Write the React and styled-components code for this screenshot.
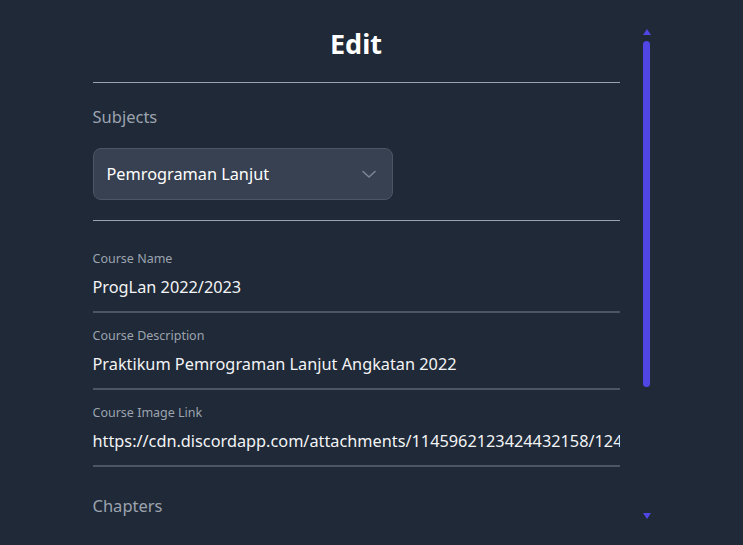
import React from "react";
import styled, { createGlobalStyle } from "styled-components";

//Global page styles
const GlobalStyle = createGlobalStyle`
  html, body {
    margin: 0;
    padding: 0;
    background-color: #1f2937;
    height: 545px;
    overflow: hidden;
  }
  * {
    box-sizing: border-box;
  }
`;

const Page = styled.div`
  display: flex;
  justify-content: center;
  padding-top: 24px;
  font-family: "Segoe UI", "Noto Sans", "Open Sans", sans-serif;
`;

const Panel = styled.div`
  display: flex;
  gap: 23px;
  width: 558px;
`;

const Content = styled.div`
  width: 527px;
  display: flex;
  flex-direction: column;
`;

const Title = styled.h1`
  margin: 0;
  font-size: 27px;
  line-height: 40px;
  font-weight: 700;
  color: #ffffff;
  text-align: center;
`;

const Divider = styled.hr`
  margin: ${({ top }) => top}px 0 0 0;
  border: none;
  border-top: 1px solid #9ca3af;
  width: 100%;
`;

const SectionLabel = styled.div`
  margin-top: ${({ top }) => top}px;
  font-size: 16.5px;
  line-height: 24px;
  color: #9ca3af;
`;

const Select = styled.div`
  margin-top: 19px;
  width: 300px;
  height: 52px;
  display: flex;
  align-items: center;
  justify-content: space-between;
  padding: 0 15px 0 13px;
  background-color: #374151;
  border: 1px solid #4b5563;
  border-radius: 8px;
  color: #ffffff;
  font-size: 16.3px;
`;

const Field = styled.div`
  margin-top: ${({ top }) => top}px;
  display: flex;
  flex-direction: column;
  gap: 8px;
`;

const FieldLabel = styled.label`
  font-size: 12.5px;
  line-height: 16px;
  color: #9ca3af;
`;

const FieldInput = styled.input`
  width: 100%;
  background: transparent;
  border: none;
  border-bottom: 2px solid #4b5563;
  outline: none;
  padding: 0 0 12px 0;
  font-family: inherit;
  font-size: 16.3px;
  line-height: 24px;
  color: #f3f4f6;
`;

const ScrollTrack = styled.div`
  width: 8px;
  height: 490px;
  margin-top: 5px;
  display: flex;
  flex-direction: column;
  align-items: center;
`;

const Arrow = styled.div`
  width: 0;
  height: 0;
  border-left: 4px solid transparent;
  border-right: 4px solid transparent;
  ${({ down }) =>
    down
      ? "border-top: 6px solid #4f46e5;"
      : "border-bottom: 6px solid #4f46e5;"}
`;

const Thumb = styled.div`
  margin-top: 6px;
  width: 7px;
  height: 346px;
  border-radius: 4px;
  background-color: #4f46e5;
`;

const Spacer = styled.div`
  flex: 1;
`;

const Chevron = () => (
  <svg width="16" height="10" viewBox="0 0 16 10" fill="none" stroke="#7d8594" strokeWidth="1.6" strokeLinecap="round" strokeLinejoin="round">
    <path d="M2 2.5l6 5.5 6-5.5" />
  </svg>
);

const fields = [
  { label: "Course Name", value: "ProgLan 2022/2023", top: 30 },
  { label: "Course Description", value: "Praktikum Pemrograman Lanjut Angkatan 2022", top: 15 },
  {
    label: "Course Image Link",
    value: "https://cdn.discordapp.com/attachments/1145962123424432158/1245678901234567890/proglan.png",
    top: 15,
  },
];

const App = () => {
  return (
    <Page>
      <GlobalStyle />
      <Panel>
        <Content>
          <Title>Edit</Title>
          <Divider top={18} />
          <SectionLabel top={22}>Subjects</SectionLabel>
          <Select>
            <span>Pemrograman Lanjut</span>
            <Chevron />
          </Select>
          <Divider top={20} />
          {fields.map((f) => (
            <Field key={f.label} top={f.top}>
              <FieldLabel>{f.label}</FieldLabel>
              <FieldInput defaultValue={f.value} />
            </Field>
          ))}
          <SectionLabel top={27}>Chapters</SectionLabel>
        </Content>
        <ScrollTrack>
          <Arrow />
          <Thumb />
          <Spacer />
          <Arrow down />
        </ScrollTrack>
      </Panel>
    </Page>
  );
};

export default App;
